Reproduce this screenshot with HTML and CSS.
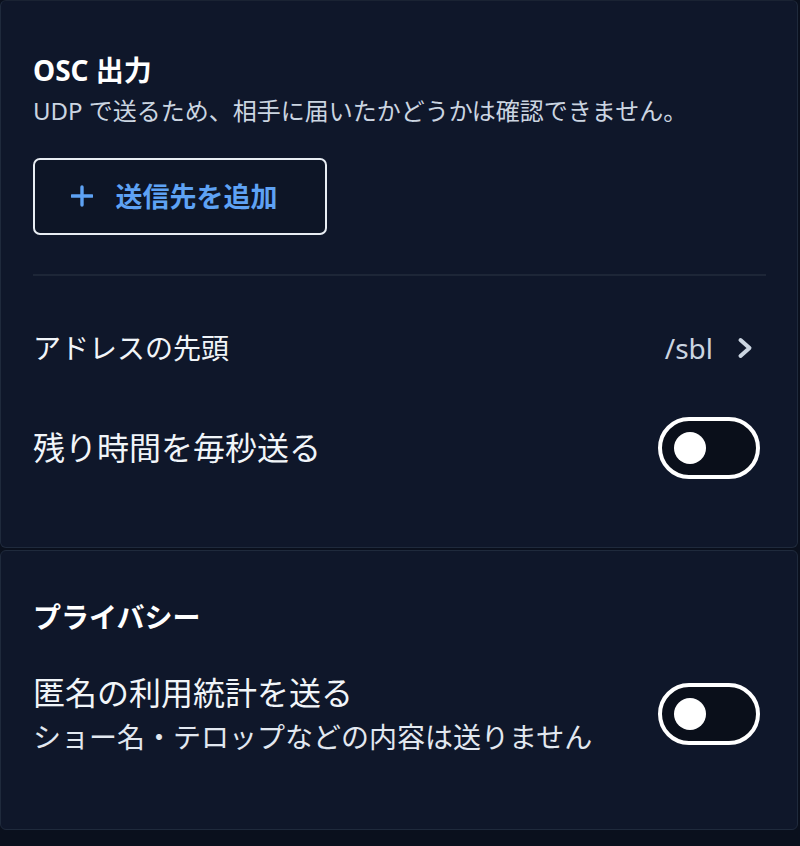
FILE: index.html
```html
<!DOCTYPE html>
<html lang="ja">
<head>
<meta charset="utf-8">
<link rel="stylesheet" href="styles.css">
</head>
<body>
<div class="page">
  <section class="card card-osc">
    <h2 class="title">OSC 出力</h2>
    <p class="subtitle">UDP で送るため、相手に届いたかどうかは確認できません。</p>
    <button class="add-btn">
      <svg class="plus" width="22" height="22" viewBox="0 0 22 22"><path d="M11 2 V20 M1 11 H21" fill="none" stroke="#5ea2f4" stroke-width="3.4" stroke-linecap="round"/></svg>
      <span>送信先を追加</span>
    </button>
    <div class="divider"></div>
    <div class="row row-address">
      <span class="label label-md">アドレスの先頭</span>
      <span class="value">/sbl
        <svg class="chev" width="16" height="22" viewBox="0 0 16 22"><path d="M3.5 3 L12.5 11 L3.5 19" fill="none" stroke="#cbd5e1" stroke-width="4" stroke-linecap="round" stroke-linejoin="round"/></svg>
      </span>
    </div>
    <div class="row row-toggle">
      <span class="label label-lg">残り時間を毎秒送る</span>
      <span class="toggle"><span class="knob"></span></span>
    </div>
  </section>
  <section class="card card-privacy">
    <h2 class="title">プライバシー</h2>
    <div class="row row-stat">
      <div class="text">
        <div class="label label-lg">匿名の利用統計を送る</div>
        <div class="hint">ショー名・テロップなどの内容は送りません</div>
      </div>
      <span class="toggle"><span class="knob"></span></span>
    </div>
  </section>
</div>
</body>
</html>
```

FILE: styles.css
```css
html, body {
  margin: 0;
  padding: 0;
  background: #0a101d;
}
body {
  font-family: "Noto Sans", "Noto Sans CJK JP", sans-serif;
  color: #f1f5f9;
  width: 800px;
  height: 846px;
  overflow: hidden;
}
.page {
  display: flex;
  flex-direction: column;
  gap: 2px;
  padding: 0 2px 0 0;
}
.card {
  background: #0f172a;
  border: 1px solid #1f2a3c;
  border-radius: 6px;
  padding: 0 31px 0 32px;
}
.card-osc {
  padding-top: 51px;
  padding-bottom: 68px;
  border-top-color: #1a2333;
}
.card-privacy {
  padding-top: 48px;
  padding-bottom: 75px;
}
.title {
  margin: 0;
  font-size: 28px;
  line-height: 36px;
  font-weight: 700;
  color: #ffffff;
}
.subtitle {
  margin: 7px 0 0;
  font-size: 24px;
  line-height: 32px;
  color: #cbd5e1;
}
.add-btn {
  margin-top: 31px;
  width: 294px;
  height: 77px;
  background: #0d1526;
  border: 2px solid #e8edf3;
  border-radius: 7px;
  color: #5ea2f4;
  font-family: inherit;
  font-size: 27px;
  font-weight: 700;
  display: flex;
  align-items: center;
  justify-content: center;
  gap: 23px;
  padding: 0 12px 3px 0;
}
.plus {
  display: block;
  flex-shrink: 0;
  margin-top: 2px;
}
.divider {
  height: 2px;
  background: #1d2637;
  margin-top: 39px;
}
.row {
  display: flex;
  align-items: center;
  justify-content: space-between;
}
.row-address {
  margin-top: 40px;
  height: 64px;
}
.row-toggle {
  margin-top: 37px;
}
.row-stat {
  margin-top: 38px;
}
.label-md {
  font-size: 28px;
  line-height: 40px;
}
.label-lg {
  font-size: 32px;
  line-height: 40px;
}
.value {
  display: flex;
  align-items: center;
  gap: 24px;
  font-size: 28px;
  color: #cbd5e1;
  margin-right: 13px;
}
.chev {
  display: block;
}
.hint {
  margin-top: 7px;
  font-size: 28px;
  line-height: 34px;
  color: #e2e8f0;
}
.toggle {
  box-sizing: border-box;
  width: 102px;
  height: 62px;
  border: 4px solid #ffffff;
  border-radius: 31px;
  background: #0a0f1a;
  display: flex;
  align-items: center;
  padding-left: 12px;
  margin-right: 6px;
  flex-shrink: 0;
}
.knob {
  width: 32px;
  height: 32px;
  border-radius: 50%;
  background: #ffffff;
}
```
